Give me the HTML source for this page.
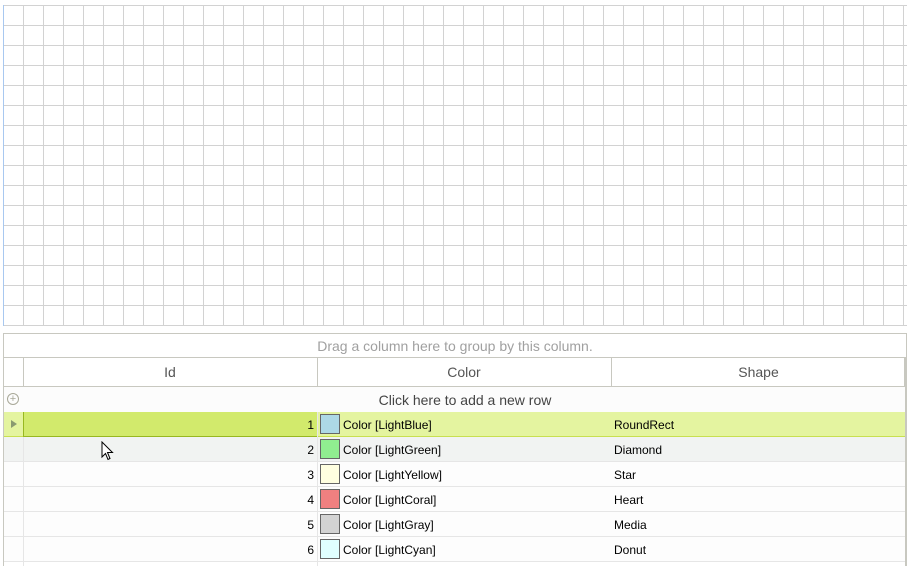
<!DOCTYPE html>
<html><head><style>
*{margin:0;padding:0;box-sizing:border-box}
body{width:910px;height:566px;background:#fff;position:relative;overflow:hidden;font-family:"Liberation Sans",sans-serif}
.grid{position:absolute;left:3px;top:5px;width:904px;height:321px;
background-image:linear-gradient(#d2d2d2 1px,transparent 1px),linear-gradient(90deg,#d2d2d2 1px,transparent 1px);
background-size:20px 20px}
.gridb{position:absolute;left:3px;top:325px;width:904px;height:1px;background:#d2d2d2}
.a{position:absolute}
.t{font-size:12px;color:#000;line-height:25px;position:absolute;top:1px}
.sw{position:absolute;width:20px;height:20px;border:1px solid #666}
</style></head><body>
<div class="grid"></div><div class="gridb"></div>
<div class="a" style="left:3px;top:5px;width:1px;height:321px;background:#a8c8f0"></div>
<div class="a" style="left:3px;top:333px;width:904px;height:233px;border:1px solid #c8c8c0;border-bottom:none"></div>
<div class="a" style="left:4px;top:334px;width:902px;height:23px;text-align:center;color:#a0a0a0;font-size:14px;line-height:25px">Drag a column here to group by this column.</div>
<div class="a" style="left:4px;top:357px;width:902px;height:30px;border-top:1px solid #c8c8c0;border-bottom:1px solid #c8c8c0;border-right:2px solid #c8c8c0"></div>
<div class="a" style="left:23px;top:357px;width:1px;height:30px;background:#c8c8c0"></div>
<div class="a" style="left:317px;top:357px;width:1px;height:30px;background:#c8c8c0"></div>
<div class="a" style="left:611px;top:357px;width:1px;height:30px;background:#c8c8c0"></div>
<div class="a" style="left:23px;top:358px;width:294px;text-align:center;font-size:14px;color:#555;line-height:29px">Id</div>
<div class="a" style="left:317px;top:358px;width:294px;text-align:center;font-size:14px;color:#555;line-height:29px">Color</div>
<div class="a" style="left:611px;top:358px;width:295px;text-align:center;font-size:14px;color:#555;line-height:29px">Shape</div>
<div class="a" style="left:4px;top:387px;width:902px;height:25px;background:#fcfcfc"></div>
<div class="a" style="left:24px;top:388px;width:882px;text-align:center;font-size:14px;color:#444;line-height:25px">Click here to add a new row</div>
<div class="a" style="left:7px;top:393px;width:12px;height:12px;border:1px solid #a8a898;border-radius:50%;font-size:11px;line-height:10px;text-align:center;color:#a8a898">+</div>
<div class="a" style="left:4px;top:412px;width:902px;height:25px;background:#e4f4a0;border-bottom:1px solid #c8e050"></div>
<div class="a" style="left:23px;top:412px;width:294px;height:25px;background:#d2ea6c;border-left:1px solid #98b820;border-bottom:1px solid #98b820"></div>
<div class="a" style="left:11px;top:420px;width:0;height:0;border-left:6px solid #8a9a70;border-top:4.5px solid transparent;border-bottom:4.5px solid transparent"></div>
<div class="a" style="left:4px;top:437px;width:902px;height:25px;background:#f1f3f2;border-bottom:1px solid #e6e6e6"></div>
<div class="a" style="left:4px;top:462px;width:902px;height:25px;background:#fdfdfd;border-bottom:1px solid #e6e6e6"></div>
<div class="a" style="left:4px;top:487px;width:902px;height:25px;background:#fdfdfd;border-bottom:1px solid #e6e6e6"></div>
<div class="a" style="left:4px;top:512px;width:902px;height:25px;background:#fdfdfd;border-bottom:1px solid #e6e6e6"></div>
<div class="a" style="left:4px;top:537px;width:902px;height:25px;background:#fdfdfd;border-bottom:1px solid #e6e6e6"></div>
<div class="a" style="left:23px;top:437px;width:1px;height:129px;background:#e6e6e6"></div>
<div class="a" style="left:317px;top:412px;width:1px;height:154px;background:#e6e6e6"></div>
<div class="a" style="left:905px;top:387px;width:2px;height:179px;background:#c8c8c0"></div>

<div class="t" style="left:250px;width:64px;text-align:right;top:413px">1</div>
<div class="t" style="left:250px;width:64px;text-align:right;top:438px">2</div>
<div class="t" style="left:250px;width:64px;text-align:right;top:463px">3</div>
<div class="t" style="left:250px;width:64px;text-align:right;top:488px">4</div>
<div class="t" style="left:250px;width:64px;text-align:right;top:513px">5</div>
<div class="t" style="left:250px;width:64px;text-align:right;top:538px">6</div>

<div class="sw" style="left:320px;top:414px;background:#add8e6"></div>
<div class="sw" style="left:320px;top:439px;background:#90ee90"></div>
<div class="sw" style="left:320px;top:464px;background:#ffffe0"></div>
<div class="sw" style="left:320px;top:489px;background:#f08080"></div>
<div class="sw" style="left:320px;top:514px;background:#d3d3d3"></div>
<div class="sw" style="left:320px;top:539px;background:#e0ffff"></div>

<div class="t" style="left:343px;top:413px">Color [LightBlue]</div>
<div class="t" style="left:343px;top:438px">Color [LightGreen]</div>
<div class="t" style="left:343px;top:463px">Color [LightYellow]</div>
<div class="t" style="left:343px;top:488px">Color [LightCoral]</div>
<div class="t" style="left:343px;top:513px">Color [LightGray]</div>
<div class="t" style="left:343px;top:538px">Color [LightCyan]</div>

<div class="t" style="left:614px;top:413px">RoundRect</div>
<div class="t" style="left:614px;top:438px">Diamond</div>
<div class="t" style="left:614px;top:463px">Star</div>
<div class="t" style="left:614px;top:488px">Heart</div>
<div class="t" style="left:614px;top:513px">Media</div>
<div class="t" style="left:614px;top:538px">Donut</div>

<svg class="a" style="left:101px;top:441px" width="14" height="21" viewBox="0 0 14 21"><path d="M1 1 L1 16 L4.5 12.5 L7 18.5 L9 17.5 L6.5 11.5 L11.5 11.5 Z" fill="#fff" stroke="#000" stroke-width="1"/></svg>
</body></html>
